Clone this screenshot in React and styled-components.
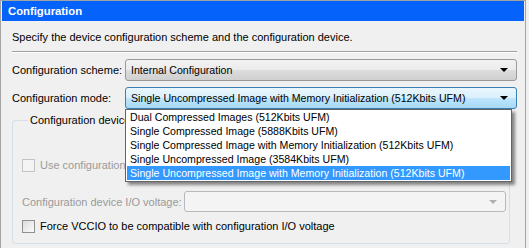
import React from 'react'
import styled, { createGlobalStyle } from 'styled-components'

const GlobalStyle = createGlobalStyle`
    body {
        margin: 0;
        background: #f0f0f0;
        font-family: 'Liberation Sans', Arial, sans-serif;
        font-size: 11px;
        color: #000;
    }
`

const modes = [
    'Dual Compressed Images (512Kbits UFM)',
    'Single Compressed Image (5888Kbits UFM)',
    'Single Compressed Image with Memory Initialization (512Kbits UFM)',
    'Single Uncompressed Image (3584Kbits UFM)',
    'Single Uncompressed Image with Memory Initialization (512Kbits UFM)',
]

function Combo({ value, variant, children }) {
    return (
        <ComboBox variant={variant}>
            <ComboText>{value}</ComboText>
            <Arrow variant={variant} />
            {children}
        </ComboBox>
    )
}

function Check({ label, disabled }) {
    return (
        <CheckRow disabled={disabled}>
            <Box disabled={disabled} />
            <span>{label}</span>
        </CheckRow>
    )
}

export default function App() {
    return (
        <>
            <GlobalStyle />
            <Panel>
                <Header>Configuration</Header>
                <Body>
                    <Description>
                        Specify the device configuration scheme and the configuration device.
                    </Description>
                    <Separator />
                    <FieldRow>
                        <Label>Configuration scheme:</Label>
                        <Combo value="Internal Configuration" />
                    </FieldRow>
                    <FieldRow>
                        <Label>Configuration mode:</Label>
                        <Combo value={modes[4]} variant="open">
                            <DropList>
                                {modes.map((m, i) => (
                                    <DropItem key={m} selected={i === 4}>
                                        {m}
                                    </DropItem>
                                ))}
                            </DropList>
                        </Combo>
                    </FieldRow>
                    <Group>
                        <Legend>Configuration device</Legend>
                        <DeviceRow>
                            <Check label="Use configuration device:" disabled />
                            <TextField />
                        </DeviceRow>
                        <VoltageRow>
                            <Label disabled>Configuration device I/O voltage:</Label>
                            <Combo value="" variant="disabled" />
                        </VoltageRow>
                        <Check label="Force VCCIO to be compatible with configuration I/O voltage" />
                    </Group>
                </Body>
            </Panel>
        </>
    )
}

const Panel = styled.div`
    box-sizing: border-box;
    width: 526px;
    height: 260px;
    border: 1px solid #a3a3a3;
    padding: 0 1px;
`
const Header = styled.div`
    height: 20px;
    background: #0563fc;
    color: #fff;
    font-weight: bold;
    font-size: 11.3px;
    line-height: 21px;
    padding-left: 6px;
`
const Body = styled.div`
    padding: 0 7px 0 10px;
`
const Description = styled.div`
    margin-top: 9px;
    line-height: 14px;
`
const Separator = styled.div`
    margin-top: 7px;
    height: 1px;
    background: #a0a0a0;
    border-bottom: 1px solid #fff;
`
const FieldRow = styled.div`
    display: flex;
    align-items: center;
    margin-top: 6px;
    &:nth-of-type(2) {
        margin-top: 4px;
    }
`
const Label = styled.div`
    width: 113px;
    flex-shrink: 0;
    color: ${(p) => (p.disabled ? '#9a9a9a' : '#000')};
`
const ComboBox = styled.div`
    position: relative;
    flex: 1;
    box-sizing: border-box;
    height: ${(p) => (p.variant === 'disabled' ? '21px' : '22px')};
    display: flex;
    align-items: center;
    padding: 0 8px 0 5px;
    border-radius: 3px;
    border: 1px solid
        ${(p) => (p.variant === 'open' ? '#3c7fb1' : p.variant === 'disabled' ? '#b7babc' : '#9a9a9a')};
    background: ${(p) =>
        p.variant === 'open'
            ? 'linear-gradient(#eaf6fd 0%, #d9f0fc 50%, #bee6fd 51%, #a7d9f5 100%)'
            : p.variant === 'disabled'
            ? '#f4f4f4'
            : 'linear-gradient(#f2f2f2 0%, #ebebeb 50%, #dddddd 51%, #cfcfcf 100%)'};
`
const ComboText = styled.div`
    flex: 1;
    white-space: nowrap;
    font-size: 10.6px;
`
const Arrow = styled.div`
    width: 0;
    height: 0;
    border-left: 4px solid transparent;
    border-right: 4px solid transparent;
    border-top: 4px solid ${(p) => (p.variant === 'disabled' ? '#b0b0b0' : '#000')};
`
const DropList = styled.div`
    position: absolute;
    top: 21px;
    left: -1px;
    width: 387px;
    box-sizing: border-box;
    border: 1px solid #646464;
    background: #fff;
    padding: 0 1px 1px 1px;
    box-shadow: 3px 3px 3px rgba(0, 0, 0, 0.45);
    z-index: 10;
`
const DropItem = styled.div`
    height: 14px;
    line-height: 14px;
    padding-left: 3px;
    font-size: 10.6px;
    white-space: nowrap;
    color: ${(p) => (p.selected ? '#fff' : '#000')};
    background: ${(p) => (p.selected ? '#3399ff' : 'transparent')};
`
const Group = styled.fieldset`
    margin: 4px 7px 0 0;
    padding: 24px 0 9px 9px;
    border: 1px solid #d5dfe5;
    border-radius: 3px;
    min-width: 0;
`
const Legend = styled.legend`
    padding: 0 2px;
    margin-left: 6px;
    line-height: 14px;
`
const DeviceRow = styled.div`
    display: flex;
    align-items: flex-start;
    margin-right: 3px;
`
const TextField = styled.div`
    flex: 1;
    box-sizing: border-box;
    height: 24px;
    margin-top: 4px;
    margin-left: 11px;
    border: 1px solid #b7babc;
    border-radius: 2px;
    background: #f4f4f4;
`
const VoltageRow = styled.div`
    display: flex;
    align-items: center;
    margin: 12px 3px 0 0;
    & > ${Label} {
        width: 162px;
    }
`
const CheckRow = styled.div`
    display: flex;
    align-items: center;
    gap: 5px;
    height: 16px;
    margin-top: 6px;
    white-space: nowrap;
    color: ${(p) => (p.disabled ? '#9a9a9a' : '#000')};
`
const Box = styled.div`
    box-sizing: border-box;
    width: 13px;
    height: 13px;
    border: 1px solid ${(p) => (p.disabled ? '#c3c3c3' : '#8e8f8f')};
    background: ${(p) => (p.disabled ? '#f4f4f4' : 'linear-gradient(135deg, #dcdcdc, #fbfbfb)')};
`
